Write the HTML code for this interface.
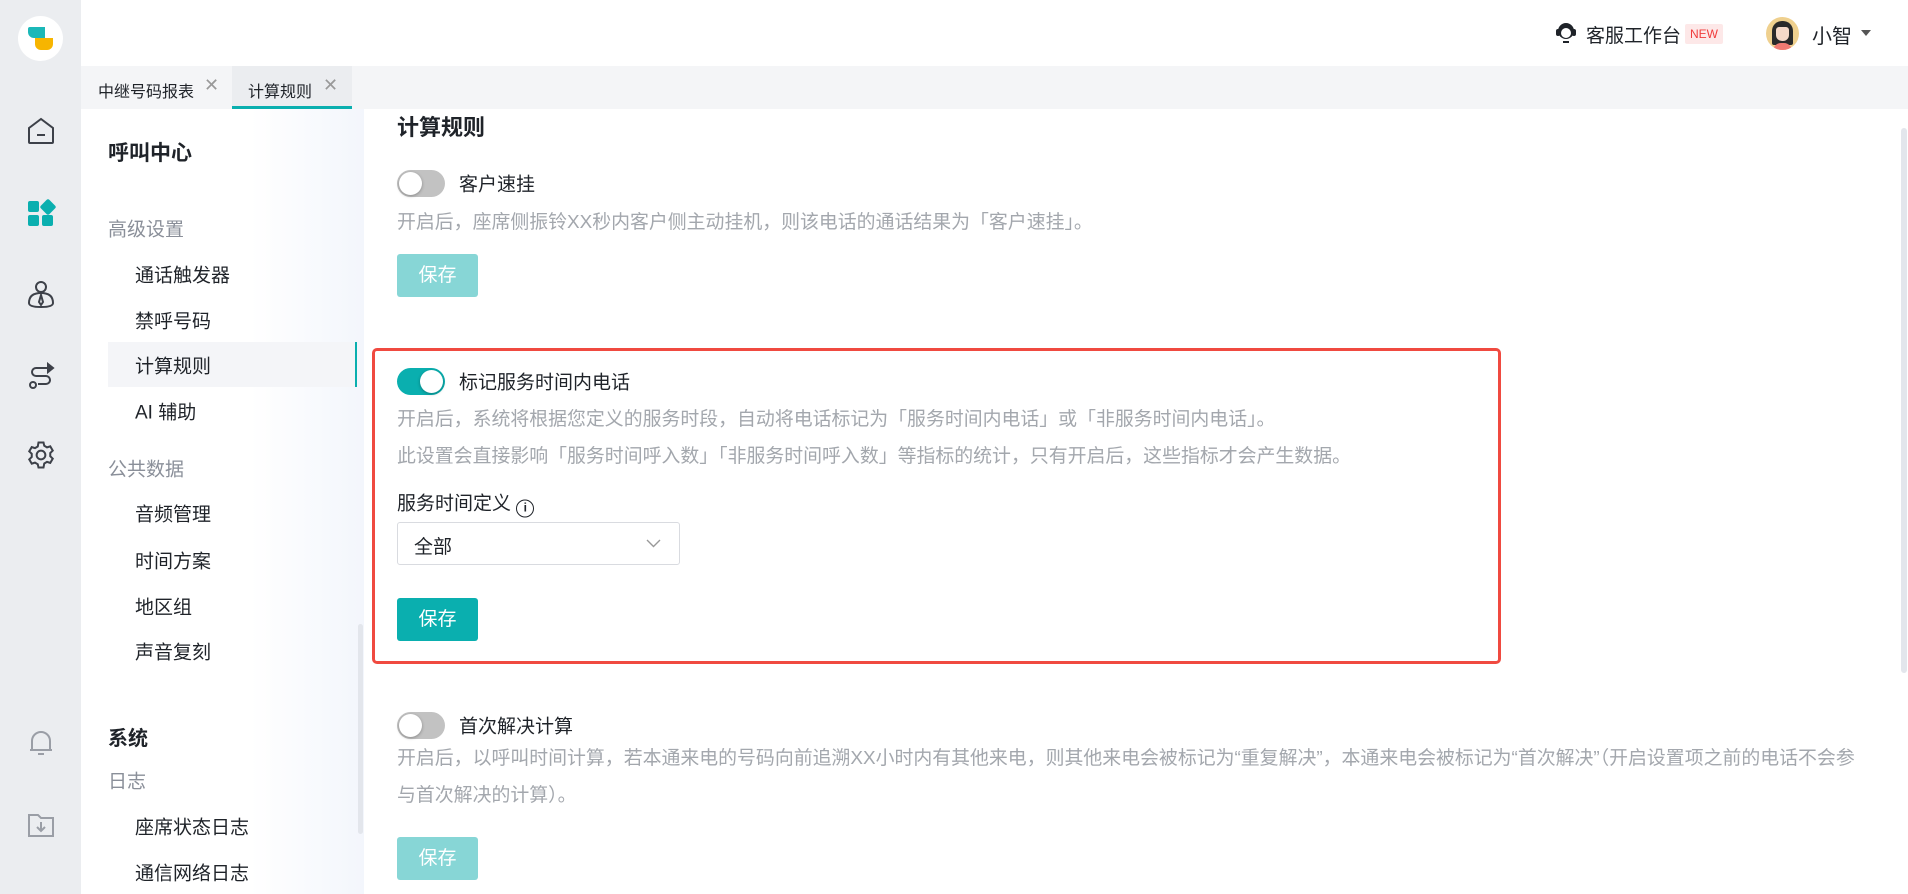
<!DOCTYPE html>
<html><head><meta charset="utf-8"><style>
*{margin:0;padding:0;box-sizing:border-box}
body{width:1908px;height:894px;overflow:hidden;background:#fff;font-family:"Liberation Sans","Noto Sans CJK SC",sans-serif;color:#1f2329;position:relative}
.a{position:absolute;white-space:nowrap}
.rail{position:absolute;left:0;top:0;width:81px;height:894px;background:#ebedf0}
.top{position:absolute;left:81px;top:0;right:0;height:66px;background:#fff}
.tabs{position:absolute;left:81px;top:66px;right:0;height:43px;background:#f4f5f7}
.nav{position:absolute;left:81px;top:109px;width:283px;height:785px;background:linear-gradient(90deg,#fff 60%,#f3f6fc)}
.nav .i{position:absolute;left:54px;font-size:19px;color:#1f2329;transform:translateY(-50%)}
.nav .g{position:absolute;left:27px;font-size:19px;color:#8a8f99;transform:translateY(-50%)}
.desc{font-size:18.9px;color:#a3a7ad}
.tog{position:absolute;width:48px;height:27px;border-radius:14px;background:#c2c2c2}
.tog::after{content:"";position:absolute;top:2px;left:2px;width:23px;height:23px;border-radius:50%;background:#fff;box-shadow:0 1px 3px rgba(0,0,0,.3)}
.tog.on{background:#0aafaf}.tog.on::after{left:23px}
.btn{position:absolute;width:81px;height:43px;border-radius:3px;background:#87d6d6;color:#fff;font-size:19px;text-align:center;line-height:43px}
.btn.on{background:#0aafaf}
.lbl{font-size:19px;transform:translateY(-50%)}
</style></head><body>
<div class="rail">
 <div class="a" style="left:18px;top:16px;width:45px;height:45px;border-radius:50%;background:#fff"></div>
 <div class="a" style="left:28px;top:27px;width:17px;height:11px;background:#1bb8b8;border-radius:2px 0 0 6px"></div>
 <div class="a" style="left:35px;top:38px;width:18px;height:12px;background:#f7b500;border-radius:0 0 6px 6px"></div>
 <svg class="a" style="left:26px;top:116px" width="30" height="30" viewBox="0 0 30 30" fill="none" stroke="#3d4149" stroke-width="2"><path d="M3 12 L15 3 L27 12 V26 Q27 27 26 27 H4 Q3 27 3 26 Z"/><path d="M11 19h8"/></svg>
 <svg class="a" style="left:26px;top:199px" width="30" height="30" viewBox="0 0 30 30" fill="#0aafaf"><rect x="2" y="2" width="11" height="11" rx="2"/><rect x="16" y="2" width="12" height="12" rx="2" transform="rotate(45 22 8)"/><rect x="2" y="16" width="11" height="11" rx="2"/><rect x="16" y="16" width="11" height="11" rx="2"/></svg>
 <svg class="a" style="left:26px;top:279px" width="30" height="30" viewBox="0 0 30 30" fill="none" stroke="#3d4149" stroke-width="2"><circle cx="15" cy="8" r="5"/><path d="M3 24 Q3 14 15 14 Q27 14 27 24 Q27 28 15 28 Q3 28 3 24Z"/><path d="M15 16 l-2 7 l2 3 l2-3z"/></svg>
 <svg class="a" style="left:26px;top:362px" width="30" height="30" viewBox="0 0 30 30" fill="none" stroke="#3d4149" stroke-width="2"><path d="M22 6H10a4 4 0 0 0 0 8h10a4 4 0 0 1 0 8H12"/><circle cx="7" cy="23" r="3"/><path d="M22 2l5 4-5 4z" fill="#3d4149"/></svg>
 <svg class="a" style="left:26px;top:440px" width="30" height="30" viewBox="0 0 24 24" fill="none" stroke="#3d4149" stroke-width="1.6"><circle cx="12" cy="12" r="3.5"/><path d="M10 2h4l.6 2.6 2.2 1.3 2.6-.8 2 3.4-2 1.9v2.6l2 1.9-2 3.4-2.6-.8-2.2 1.3L14 22h-4l-.6-2.6-2.2-1.3-2.6.8-2-3.4 2-1.9v-2.6l-2-1.9 2-3.4 2.6.8 2.2-1.3z"/></svg>
 <svg class="a" style="left:27px;top:728px" width="28" height="30" viewBox="0 0 28 30" fill="none" stroke="#9a9ea6" stroke-width="2"><path d="M5 22V13a9 9 0 0 1 18 0v9H5z"/><path d="M3 22h22"/><path d="M11 26h6"/></svg>
 <svg class="a" style="left:26px;top:810px" width="30" height="30" viewBox="0 0 30 30" fill="none" stroke="#9a9ea6" stroke-width="2"><path d="M3 5h9l3 3h12v18H3z"/><path d="M15 12v9M11 17l4 4 4-4"/></svg>
</div>
<div class="top">
 <svg class="a" style="left:1473px;top:20px" width="24" height="26" viewBox="0 0 24 26" fill="#1f2329"><circle cx="12" cy="11" r="8"/><rect x="2" y="9" width="4" height="7" rx="2"/><rect x="18" y="9" width="4" height="7" rx="2"/><path d="M9 21h6v2H9z"/><circle cx="12" cy="13" r="5" fill="#fff"/></svg>
 <div class="a" style="left:1505px;top:21px;font-size:19px">客服工作台</div>
 <div class="a" style="left:1604px;top:24px;width:38px;height:20px;background:#fde8e8;color:#f03c3c;font-size:12px;line-height:20px;text-align:center;border-radius:2px">NEW</div>
 <div class="a" style="left:1685px;top:17px;width:33px;height:33px;border-radius:50%;background:#efd08e;overflow:hidden"><div style="position:absolute;left:6px;top:4px;width:21px;height:24px;border-radius:10px 10px 2px 2px;background:#2a2a2a"></div><div style="position:absolute;left:10px;top:10px;width:13px;height:14px;border-radius:3px 3px 6px 6px;background:#f5d9c8"></div><div style="position:absolute;left:7px;top:26px;width:19px;height:10px;border-radius:8px 8px 0 0;background:#ef7a72"></div></div>
 <div class="a" style="left:1731px;top:20px;font-size:20px">小智</div>
 <div class="a" style="left:1780px;top:30px;width:0;height:0;border-left:5px solid transparent;border-right:5px solid transparent;border-top:6px solid #555"></div>
</div>
<div class="tabs">
 <div class="a" style="left:17px;top:12px;font-size:16px">中继号码报表</div>
 <div class="a" style="left:123px;top:9px;font-size:18px;color:#999">✕</div>
 <div class="a" style="left:151px;top:0;width:120px;height:43px;background:#ebedf0;border-bottom:3px solid #0aafaf"></div>
 <div class="a" style="left:167px;top:12px;font-size:16px">计算规则</div>
 <div class="a" style="left:242px;top:9px;font-size:18px;color:#999">✕</div>
</div>
<div class="nav">
 <div class="a" style="left:27px;top:28px;font-size:21px;font-weight:bold">呼叫中心</div>
 <div class="g" style="top:119px">高级设置</div>
 <div class="i" style="top:165px">通话触发器</div>
 <div class="i" style="top:211px">禁呼号码</div>
 <div class="a" style="left:27px;top:233px;width:249px;height:45px;background:#f4f5f8;border-right:2px solid #0aafaf"></div>
 <div class="i" style="top:256px">计算规则</div>
 <div class="i" style="top:302px">AI 辅助</div>
 <div class="g" style="top:359px">公共数据</div>
 <div class="i" style="top:404px">音频管理</div>
 <div class="i" style="top:451px">时间方案</div>
 <div class="i" style="top:497px">地区组</div>
 <div class="i" style="top:542px">声音复刻</div>
 <div class="a" style="left:27px;top:613px;font-size:20px;font-weight:bold">系统</div>
 <div class="g" style="top:671px">日志</div>
 <div class="i" style="top:717px">座席状态日志</div>
 <div class="i" style="top:763px">通信网络日志</div>
</div>
<div class="a" style="left:358px;top:624px;width:5px;height:210px;background:#e3e6ec;border-radius:3px"></div>
<div class="a" style="left:1901px;top:128px;width:6px;height:545px;background:#e3e6ec;border-radius:3px"></div>

<div class="a" style="left:397px;top:110px;font-size:22px;font-weight:bold">计算规则</div>
<div class="tog" style="left:397px;top:170px"></div>
<div class="a lbl" style="left:459px;top:183px">客户速挂</div>
<div class="a desc" style="left:397px;top:207px">开启后，座席侧振铃XX秒内客户侧主动挂机，则该电话的通话结果为「客户速挂」。</div>
<div class="btn" style="left:397px;top:254px">保存</div>

<div class="a" style="left:372px;top:348px;width:1129px;height:316px;border:3px solid #f04a40;border-radius:5px"></div>
<div class="tog on" style="left:397px;top:368px"></div>
<div class="a lbl" style="left:459px;top:381px">标记服务时间内电话</div>
<div class="a desc" style="left:397px;top:404px">开启后，系统将根据您定义的服务时段，自动将电话标记为「服务时间内电话」或「非服务时间内电话」。</div>
<div class="a desc" style="left:397px;top:441px">此设置会直接影响「服务时间呼入数」「非服务时间呼入数」等指标的统计，只有开启后，这些指标才会产生数据。</div>
<div class="a lbl" style="left:397px;top:503px">服务时间定义 <span style="display:inline-block;width:18px;height:18px;border:1.6px solid #1f2329;border-radius:50%;font-size:12px;line-height:15px;text-align:center;vertical-align:-2px;font-weight:bold">i</span></div>
<div class="a" style="left:397px;top:522px;width:283px;height:43px;border:1px solid #d9dbe0;border-radius:3px"><span style="position:absolute;left:16px;top:9px;font-size:19px">全部</span><svg style="position:absolute;right:18px;top:16px" width="15" height="9" viewBox="0 0 15 9" fill="none" stroke="#999" stroke-width="1.4"><path d="M1 1l6.5 6.5 6.5-6.5"/></svg></div>
<div class="btn on" style="left:397px;top:598px">保存</div>

<div class="tog" style="left:397px;top:712px"></div>
<div class="a lbl" style="left:459px;top:725px">首次解决计算</div>
<div class="a desc" style="left:397px;top:740px;white-space:normal;width:1460px;line-height:37px">开启后，以呼叫时间计算，若本通来电的号码向前追溯XX小时内有其他来电，则其他来电会被标记为“重复解决”，本通来电会被标记为“首次解决”（开启设置项之前的电话不会参与首次解决的计算）。</div>
<div class="btn" style="left:397px;top:837px">保存</div>
</body></html>
